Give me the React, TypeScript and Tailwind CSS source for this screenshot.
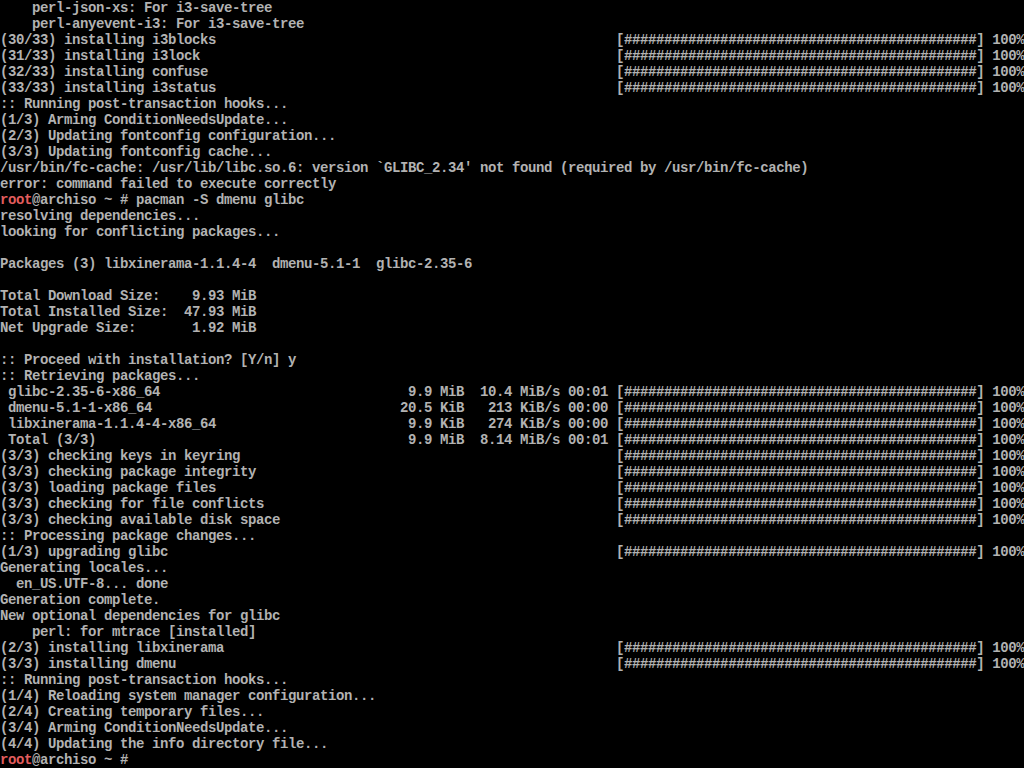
const BAR = "[" + "#".repeat(44) + "] 100%";

// status line with a progress bar starting at column 77
const withBar = (text: string) => text.padEnd(77) + BAR;

// download line: name, size, unit, rate, rate unit, time
const dl = (name: string, size: string, unit: string, rate: string, rateUnit: string, time: string) =>
  (" " + name).padEnd(50) +
  size.padStart(4) +
  " " +
  unit +
  "  " +
  rate.padStart(4) +
  " " +
  rateUnit +
  " " +
  time +
  " " +
  BAR;

type Line = string | { prompt: string };

const lines: Line[] = [
  "    perl-json-xs: For i3-save-tree",
  "    perl-anyevent-i3: For i3-save-tree",
  withBar("(30/33) installing i3blocks"),
  withBar("(31/33) installing i3lock"),
  withBar("(32/33) installing confuse"),
  withBar("(33/33) installing i3status"),
  ":: Running post-transaction hooks...",
  "(1/3) Arming ConditionNeedsUpdate...",
  "(2/3) Updating fontconfig configuration...",
  "(3/3) Updating fontconfig cache...",
  "/usr/bin/fc-cache: /usr/lib/libc.so.6: version `GLIBC_2.34' not found (required by /usr/bin/fc-cache)",
  "error: command failed to execute correctly",
  { prompt: "pacman -S dmenu glibc" },
  "resolving dependencies...",
  "looking for conflicting packages...",
  "",
  "Packages (3) libxinerama-1.1.4-4  dmenu-5.1-1  glibc-2.35-6",
  "",
  "Total Download Size:    9.93 MiB",
  "Total Installed Size:  47.93 MiB",
  "Net Upgrade Size:       1.92 MiB",
  "",
  ":: Proceed with installation? [Y/n] y",
  ":: Retrieving packages...",
  dl("glibc-2.35-6-x86_64", "9.9", "MiB", "10.4", "MiB/s", "00:01"),
  dl("dmenu-5.1-1-x86_64", "20.5", "KiB", "213", "KiB/s", "00:00"),
  dl("libxinerama-1.1.4-4-x86_64", "9.9", "KiB", "274", "KiB/s", "00:00"),
  dl("Total (3/3)", "9.9", "MiB", "8.14", "MiB/s", "00:01"),
  withBar("(3/3) checking keys in keyring"),
  withBar("(3/3) checking package integrity"),
  withBar("(3/3) loading package files"),
  withBar("(3/3) checking for file conflicts"),
  withBar("(3/3) checking available disk space"),
  ":: Processing package changes...",
  withBar("(1/3) upgrading glibc"),
  "Generating locales...",
  "  en_US.UTF-8... done",
  "Generation complete.",
  "New optional dependencies for glibc",
  "    perl: for mtrace [installed]",
  withBar("(2/3) installing libxinerama"),
  withBar("(3/3) installing dmenu"),
  ":: Running post-transaction hooks...",
  "(1/4) Reloading system manager configuration...",
  "(2/4) Creating temporary files...",
  "(3/4) Arming ConditionNeedsUpdate...",
  "(4/4) Updating the info directory file...",
  { prompt: "" },
];

function Row({ line }: { line: Line }) {
  if (typeof line === "string") {
    return <div className="h-4 leading-4 whitespace-pre">{line}</div>;
  }
  return (
    <div className="h-4 leading-4 whitespace-pre">
      <span className="text-[#e35d5d]">root</span>
      {"@archiso ~ # " + line.prompt}
    </div>
  );
}

export default function App() {
  return (
    <div className="w-[1024px] h-[768px] overflow-hidden bg-black text-[#b2b2b2] font-['Liberation_Mono',monospace] text-[14px] tracking-[-0.4px] font-bold">
      <div className="flex flex-col">
        {lines.map((l, i) => (
          <Row key={i} line={l} />
        ))}
      </div>
    </div>
  );
}
